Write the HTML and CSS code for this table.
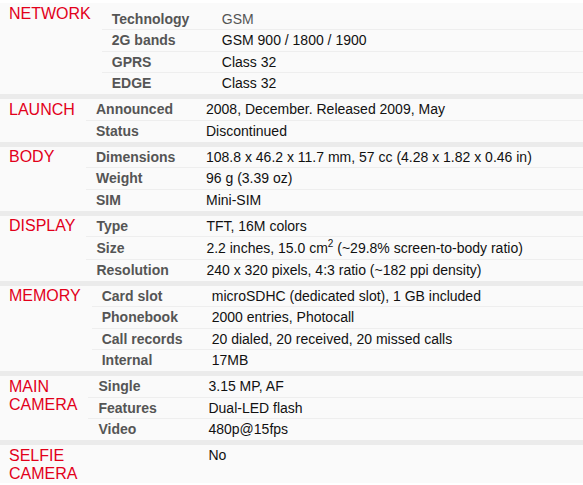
FILE: index.html
```html
<!DOCTYPE html>
<html>
<head>
<meta charset="utf-8">
<link rel="stylesheet" href="styles.css">
</head>
<body>
<div class="specs">
  <section class="spec spec-first">
    <h3 class="spec-head">NETWORK</h3>
    <div class="spec-rows">
      <div class="spec-row"><span class="spec-label">Technology</span><span class="spec-value muted">GSM</span></div>
      <div class="spec-row"><span class="spec-label">2G bands</span><span class="spec-value">GSM 900 / 1800 / 1900</span></div>
      <div class="spec-row"><span class="spec-label">GPRS</span><span class="spec-value">Class 32</span></div>
      <div class="spec-row"><span class="spec-label">EDGE</span><span class="spec-value">Class 32</span></div>
    </div>
  </section>
  <section class="spec">
    <h3 class="spec-head">LAUNCH</h3>
    <div class="spec-rows">
      <div class="spec-row"><span class="spec-label">Announced</span><span class="spec-value">2008, December. Released 2009, May</span></div>
      <div class="spec-row"><span class="spec-label">Status</span><span class="spec-value">Discontinued</span></div>
    </div>
  </section>
  <section class="spec">
    <h3 class="spec-head">BODY</h3>
    <div class="spec-rows">
      <div class="spec-row"><span class="spec-label">Dimensions</span><span class="spec-value">108.8 x 46.2 x 11.7 mm, 57 cc (4.28 x 1.82 x 0.46 in)</span></div>
      <div class="spec-row"><span class="spec-label">Weight</span><span class="spec-value">96 g (3.39 oz)</span></div>
      <div class="spec-row"><span class="spec-label">SIM</span><span class="spec-value">Mini-SIM</span></div>
    </div>
  </section>
  <section class="spec">
    <h3 class="spec-head">DISPLAY</h3>
    <div class="spec-rows">
      <div class="spec-row"><span class="spec-label">Type</span><span class="spec-value">TFT, 16M colors</span></div>
      <div class="spec-row spec-row-tall"><span class="spec-label">Size</span><span class="spec-value">2.2 inches, 15.0 cm<sup>2</sup> (~29.8% screen-to-body ratio)</span></div>
      <div class="spec-row"><span class="spec-label">Resolution</span><span class="spec-value">240 x 320 pixels, 4:3 ratio (~182 ppi density)</span></div>
    </div>
  </section>
  <section class="spec">
    <h3 class="spec-head">MEMORY</h3>
    <div class="spec-rows">
      <div class="spec-row"><span class="spec-label">Card slot</span><span class="spec-value">microSDHC (dedicated slot), 1 GB included</span></div>
      <div class="spec-row"><span class="spec-label">Phonebook</span><span class="spec-value">2000 entries, Photocall</span></div>
      <div class="spec-row"><span class="spec-label">Call records</span><span class="spec-value">20 dialed, 20 received, 20 missed calls</span></div>
      <div class="spec-row"><span class="spec-label">Internal</span><span class="spec-value">17MB</span></div>
    </div>
  </section>
  <section class="spec">
    <h3 class="spec-head">MAIN CAMERA</h3>
    <div class="spec-rows">
      <div class="spec-row"><span class="spec-label">Single</span><span class="spec-value">3.15 MP, AF</span></div>
      <div class="spec-row"><span class="spec-label">Features</span><span class="spec-value">Dual-LED flash</span></div>
      <div class="spec-row"><span class="spec-label">Video</span><span class="spec-value">480p@15fps</span></div>
    </div>
  </section>
  <section class="spec">
    <h3 class="spec-head">SELFIE CAMERA</h3>
    <div class="spec-rows">
      <div class="spec-row"><span class="spec-label"></span><span class="spec-value">No</span></div>
    </div>
  </section>
</div>
</body>
</html>
```

FILE: styles.css
```css
body {
  margin: 0;
  background: #ffffff;
  font-family: "Liberation Sans", Arial, sans-serif;
}

.specs {
  margin-top: 3px;
  background: #ebebeb;
  display: flex;
  flex-direction: column;
  gap: 5px;
}

.spec {
  display: flex;
  align-items: flex-start;
  background: #fafafa;
}

.spec-head {
  flex: none;
  margin: 0;
  width: min-content;
  min-width: 66px;
  padding: 1.5px 11px 0 9px;
  font-size: 16px;
  font-weight: normal;
  line-height: normal;
  color: #e2001a;
}

.spec-rows {
  flex: 1;
}

.spec-first .spec-rows {
  padding-top: 6px;
}

.spec-row {
  display: grid;
  grid-template-columns: 110px 1fr;
  align-items: baseline;
  border-bottom: 1px solid #eeeeee;
  font-size: 14px;
  line-height: 16.33px;
}

.spec-row-tall {
  padding-top: 1px;
}

.spec-row:last-child {
  border-bottom-color: transparent;
}

.spec-label {
  padding: 2px 0 2px 10px;
  font-weight: bold;
  color: #555555;
}

.spec-value {
  padding: 2px 10px;
  color: #111111;
}

.spec-value sup {
  font-size: 10px;
  line-height: 0;
}

.spec-value.muted {
  color: #555555;
}
```
